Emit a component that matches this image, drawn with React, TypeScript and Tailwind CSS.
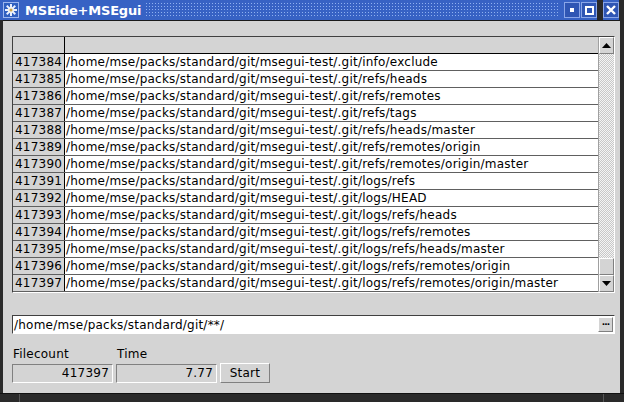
import React from 'react';

const rows = [
  ['417384', '/home/mse/packs/standard/git/msegui-test/.git/info/exclude'],
  ['417385', '/home/mse/packs/standard/git/msegui-test/.git/refs/heads'],
  ['417386', '/home/mse/packs/standard/git/msegui-test/.git/refs/remotes'],
  ['417387', '/home/mse/packs/standard/git/msegui-test/.git/refs/tags'],
  ['417388', '/home/mse/packs/standard/git/msegui-test/.git/refs/heads/master'],
  ['417389', '/home/mse/packs/standard/git/msegui-test/.git/refs/remotes/origin'],
  ['417390', '/home/mse/packs/standard/git/msegui-test/.git/refs/remotes/origin/master'],
  ['417391', '/home/mse/packs/standard/git/msegui-test/.git/logs/refs'],
  ['417392', '/home/mse/packs/standard/git/msegui-test/.git/logs/HEAD'],
  ['417393', '/home/mse/packs/standard/git/msegui-test/.git/logs/refs/heads'],
  ['417394', '/home/mse/packs/standard/git/msegui-test/.git/logs/refs/remotes'],
  ['417395', '/home/mse/packs/standard/git/msegui-test/.git/logs/refs/heads/master'],
  ['417396', '/home/mse/packs/standard/git/msegui-test/.git/logs/refs/remotes/origin'],
  ['417397', '/home/mse/packs/standard/git/msegui-test/.git/logs/refs/remotes/origin/master'],
];

const font = "font-['DejaVu_Sans',sans-serif]";

// raised 3d bevel used by buttons
const raised = 'border border-t-white border-l-white border-b-[#808080] border-r-[#808080]';
// sunken 3d bevel used by edits
const sunken = 'border border-t-[#808080] border-l-[#808080] border-b-white border-r-white';

const AppIcon: React.FC = () => (
  <svg width="16" height="16" viewBox="0 0 16 16">
    <rect x="0.5" y="0.5" width="15" height="15" fill="#2f5fc0" stroke="#9db6ee" />
    {[0, 45, 90, 135].map(a => (
      <line key={a} x1="8" y1="2" x2="8" y2="14" stroke="#e8efff" strokeWidth="2" transform={`rotate(${a} 8 8)`} />
    ))}
    <circle cx="8" cy="8" r="3" fill="#f0f0f0" />
    <circle cx="8" cy="8" r="1.5" fill="#c9a44a" />
  </svg>
);

const WinButton: React.FC<{ children: React.ReactNode }> = ({ children }) => (
  <div className="w-[16px] h-[16px] bg-[#2f56b4] border border-[#8aa6e8] flex items-center justify-center">
    {children}
  </div>
);

const Arrow: React.FC<{ up?: boolean }> = ({ up }) => (
  <svg width="9" height="5" viewBox="0 0 9 5">
    <polygon points={up ? '0,5 9,5 4.5,0' : '0,0 9,0 4.5,5'} fill="#000" />
  </svg>
);

const App: React.FC = () => {
  return (
    <div className={`w-[624px] h-[402px] bg-[#2a2a2a] flex flex-col ${font}`}>
      {/* title bar */}
      <div className="h-[20px] bg-[#3762c4] flex items-center pl-[3px] shrink-0">
        <AppIcon />
        <span className="ml-[6px] text-white font-bold text-[13px] tracking-[-0.2px] leading-none">MSEide+MSEgui</span>
        <div className="flex-1 h-[16px] mx-[4px] bg-[radial-gradient(circle,#8fb0f0_0.8px,transparent_1px)] bg-[length:3px_3px]" />
        <div className="flex items-center gap-[1px]">
          <WinButton>
            <div className="w-[4px] h-[4px] bg-white" />
          </WinButton>
          <WinButton>
            <div className="w-[9px] h-[9px] border-2 border-white" />
          </WinButton>
        </div>
        <div className="w-[6px] h-[20px] bg-[#2a2a2a]" />
        <WinButton>
          <svg width="10" height="10" viewBox="0 0 10 10">
            <path d="M1 1 L9 9 M9 1 L1 9" stroke="#fff" strokeWidth="2.4" />
          </svg>
        </WinButton>
        <div className="w-[5px] h-[20px] bg-[#2a2a2a]" />
      </div>

      {/* client area */}
      <div className="flex-1 mx-[3px] mr-[4px] bg-[#d4d4d4] border-t border-[#1a1a1a] flex flex-col pl-[9px] pr-[5px] pt-[15px] text-[12px] tracking-[0.22px] text-black">
        {/* file grid */}
        <div className="h-[257px] flex border border-t-[#404040] border-l-[#404040] border-b-white border-r-white">
          <div className="flex-1 flex flex-col bg-white overflow-hidden">
            <div className="h-[17px] flex border-b border-black bg-[#d4d4d4] shrink-0">
              <div className="w-[52px] shrink-0 border-r border-black" />
              <div className="flex-1" />
            </div>
            {rows.map(([n, path]) => (
              <div key={n} className="h-[17px] flex border-b border-[#606060] shrink-0 leading-[16px]">
                <div className="w-[52px] shrink-0 bg-[#d4d4d4] border-r border-black pl-[2px] whitespace-nowrap">{n}</div>
                <div className="flex-1 pl-[1px] whitespace-nowrap">{path}</div>
              </div>
            ))}
          </div>
          {/* vertical scrollbar */}
          <div className="w-[16px] flex flex-col bg-[repeating-conic-gradient(#c8c8c8_0_25%,#f4f4f4_0_50%)] bg-[length:2px_2px] border-l border-[#a0a0a0]">
            <div className={`h-[17px] bg-[#d4d4d4] ${raised} flex items-center justify-center`}>
              <Arrow up />
            </div>
            <div className="flex-1" />
            <div className={`h-[17px] bg-[#d4d4d4] ${raised}`} />
            <div className={`h-[17px] bg-[#d4d4d4] ${raised} flex items-center justify-center`}>
              <Arrow />
            </div>
          </div>
        </div>

        {/* path edit */}
        <div className="mt-[22px] h-[19px] bg-white flex items-center border border-t-[#404040] border-l-[#404040] border-b-white border-r-white">
          <span className="flex-1 pl-[1px] leading-[16px]">/home/mse/packs/standard/git/**/</span>
          <div className={`w-[15px] h-[15px] mr-[1px] bg-[#d4d4d4] ${raised} flex items-end justify-center pb-[4px]`}>
            <span className="text-[9px] leading-none font-bold tracking-[-1px]">...</span>
          </div>
        </div>

        {/* stats */}
        <div className="mt-[12px] flex items-end gap-[3px]">
          <div className="flex flex-col">
            <span className="pl-[1px] leading-[16px] mb-[2px]">Filecount</span>
            <div className={`w-[101px] h-[19px] ${sunken} text-right pr-[3px] leading-[17px]`}>417397</div>
          </div>
          <div className="flex flex-col">
            <span className="pl-[1px] leading-[16px] mb-[2px]">Time</span>
            <div className={`w-[101px] h-[19px] ${sunken} text-right pr-[3px] leading-[17px]`}>7.77</div>
          </div>
          <div className={`w-[50px] h-[20px] ${raised} flex items-center justify-center leading-none`}>Start</div>
        </div>
      </div>

      {/* bottom frame */}
      <div className="h-[9px] shrink-0 flex border-t border-[#111]">
        <div className="w-[20px] border-r border-[#555]" />
        <div className="flex-1 border-r border-[#555]" />
        <div className="w-[20px]" />
      </div>
    </div>
  );
};

export default App;
